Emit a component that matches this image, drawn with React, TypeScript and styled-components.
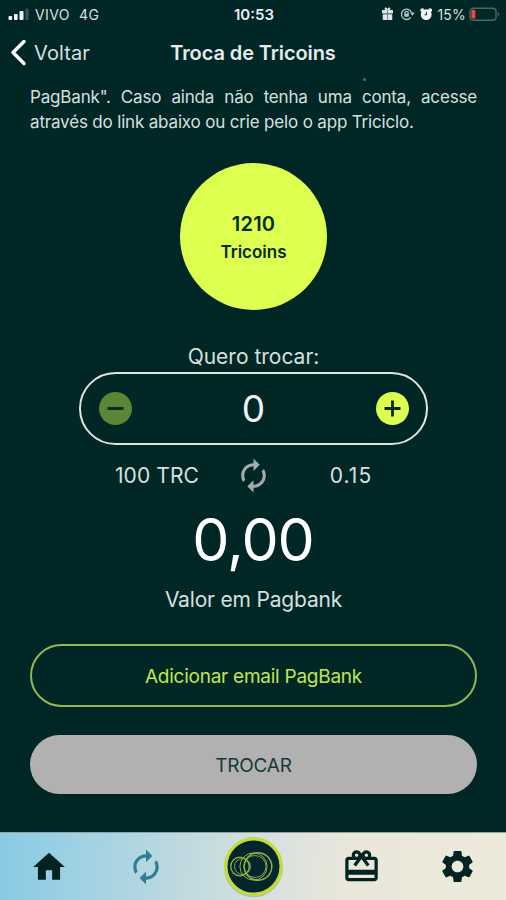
import React from "react";
import styled, { createGlobalStyle } from "styled-components";
import { MdAutorenew, MdCardGiftcard, MdHome, MdSettings } from "react-icons/md";

const colors = {
  night: "#012626",
  lime: "#dcff50",
  pale: "#d5e0df",
  grey: "#b1b1b1",
};

const GlobalStyle = createGlobalStyle`
  * { box-sizing: border-box; }
  body { margin: 0; background: ${colors.night}; }
  button { font: inherit; margin: 0; padding: 0; border: 0; background: none; color: inherit; }
`;

const Screen = styled.div`
  display: flex;
  flex-direction: column;
  width: 506px;
  height: 900px;
  overflow: hidden;
  background: ${colors.night};
  color: ${colors.pale};
  font-family: Inter, "Liberation Sans", sans-serif;
`;

const StatusBar = styled.div`
  display: grid;
  grid-template-columns: 1fr auto 1fr;
  align-items: center;
  height: 28px;
  padding: 0 6px 0 8px;
  font-size: 14px;
`;

const StatusGroup = styled.div<{ $end?: boolean }>`
  display: flex;
  align-items: center;
  justify-content: ${(p) => (p.$end ? "flex-end" : "flex-start")};
`;

const Carrier = styled.span`
  margin-left: 6px;
  letter-spacing: 0.4px;
`;

const Network = styled.span`
  margin-left: 9px;
  letter-spacing: 0.6px;
`;

const Clock = styled.span`
  font-size: 15px;
  font-weight: 600;
  color: #e8eeed;
`;

const BatteryLevel = styled.span`
  margin: 0 3px 0 4px;
  letter-spacing: 0.2px;
`;

const Header = styled.header`
  display: grid;
  grid-template-columns: 1fr auto 1fr;
  align-items: center;
  height: 49px;
  padding: 0 10px;
`;

const BackButton = styled.button`
  display: flex;
  align-items: center;
  gap: 7px;
  font-size: 20px;
  letter-spacing: 0.1px;
`;

const Title = styled.h1`
  margin: 0;
  font-size: 20px;
  font-weight: 600;
  letter-spacing: -0.1px;
  color: #e4eceb;
`;

const Content = styled.main`
  display: flex;
  flex-direction: column;
  align-items: center;
  flex: 1;
  padding: 0 29px 0 30px;
`;

const ClippedLine = styled.div`
  align-self: stretch;
  height: 8px;
  padding: 1px 0 0 333px;
`;

const Speck = styled.div`
  width: 3px;
  height: 3px;
  border-radius: 50%;
  background: #527170;
`;

const Paragraph = styled.p`
  align-self: stretch;
  margin: 0;
  font-size: 17px;
  line-height: 25px;
  letter-spacing: -0.17px;
  text-align: justify;
`;

const Balance = styled.div`
  display: flex;
  flex-direction: column;
  align-items: center;
  width: 147px;
  height: 147px;
  margin-top: 28px;
  padding-top: 48px;
  border-radius: 50%;
  background: ${colors.lime};
  color: #082a20;
  font-weight: 600;
`;

const BalanceValue = styled.span`
  font-size: 20px;
  line-height: 27px;
  letter-spacing: 0.2px;
`;

const BalanceUnit = styled.span`
  font-size: 17px;
  line-height: 28px;
`;

const AmountLabel = styled.label`
  margin-top: 33px;
  font-size: 21px;
  line-height: 28px;
`;

const Stepper = styled.div`
  display: flex;
  align-items: center;
  justify-content: space-between;
  width: 349px;
  height: 73px;
  margin-top: 1px;
  padding: 0 17.5px;
  border: 2.5px solid #e0e5db;
  border-radius: 37px;
`;

const StepButton = styled.button<{ $muted?: boolean }>`
  display: flex;
  align-items: center;
  justify-content: center;
  width: 33px;
  height: 33px;
  border-radius: 50%;
  background: ${(p) => (p.$muted ? "#5b8635" : colors.lime)};
`;

const Amount = styled.span`
  font-size: 37px;
  line-height: 44px;
  color: #f0f4f4;
`;

const Rate = styled.div`
  display: grid;
  grid-template-columns: 156px 37px 157px;
  align-items: center;
  height: 38px;
  margin-top: 11px;
  font-size: 21px;
  text-align: center;
`;

const RateUnit = styled.span<{ $wide?: boolean }>`
  padding-left: ${(p) => (p.$wide ? "2px" : "1px")};
  letter-spacing: ${(p) => (p.$wide ? "1.1px" : "0.1px")};
`;

const Total = styled.div`
  margin: 11px 1px 0 0;
  font-size: 59px;
  line-height: 70px;
  letter-spacing: -1px;
  color: #fff;
`;

const TotalLabel = styled.div`
  margin-top: 11px;
  font-size: 21px;
  line-height: 28px;
  letter-spacing: -0.18px;
`;

const PillButton = styled.button<{ $filled?: boolean }>`
  align-self: stretch;
  height: ${(p) => (p.$filled ? "59px" : "63px")};
  margin-top: ${(p) => (p.$filled ? "28px" : "30px")};
  padding-top: 1px;
  border: ${(p) => (p.$filled ? "0" : "2px solid #91b653")};
  border-radius: 32px;
  background: ${(p) => (p.$filled ? colors.grey : "transparent")};
  color: ${(p) => (p.$filled ? "#17393a" : "#bfe653")};
  font-size: 19px;
  letter-spacing: -0.25px;
`;

const TabBar = styled.nav`
  display: grid;
  grid-template-columns: 97px 97px 118px 98px 95px;
  align-items: center;
  justify-items: center;
  height: 68px;
  border-top: 1px solid #8fa5a3;
  background: linear-gradient(92deg, #89cae4 0%, #a3d2e3 18%, #c0dadf 37%, #dbe1df 55%, #e9e7da 68%, #ecead9 100%);
`;

const Tab = styled.button<{ $active?: boolean }>`
  display: flex;
  color: ${(p) => (p.$active ? "#2e7d95" : "#032323")};
`;

function SignalIcon() {
  return (
    <svg width="21" height="13" viewBox="0 0 21 13">
      <g fill="#f2f6f6">
        <rect x="0.5" y="8" width="3.6" height="4" rx="1" />
        <rect x="6" y="6" width="3.6" height="6" rx="1" />
        <rect x="11.5" y="3" width="4" height="9" rx="1" />
      </g>
      <rect x="17.2" y="0.5" width="3.4" height="11.5" rx="1" fill="#345554" />
    </svg>
  );
}

function StatusIcons() {
  return (
    <svg width="52" height="16" viewBox="0 0 52 16">
      <g fill="#dfe7e6">
        <rect x="1" y="4" width="11" height="3.4" rx="0.6" />
        <rect x="1.7" y="8.2" width="9.6" height="5.8" rx="0.8" />
        <path d="M6.5 4.5C3 4.5 3 1.5 4.7 1.6c1 0 1.5 1 1.8 1.8.3-.8.8-1.8 1.8-1.8 1.7 0 1.7 2.9-1.8 2.9Z" />
      </g>
      <path d="M6.5 4v10" stroke="#587271" strokeWidth="0.8" />
      <g fill="none" stroke="#b7c7c6" strokeWidth="1.3">
        <path d="M30.4 6.2a5.2 5.2 0 1 0-.6 5.2" />
        <path d="M23.9 7.8V7a1.7 1.7 0 0 1 3.4 0v.8" />
      </g>
      <path d="M28.9 6.6h5l-2.5 3.1Z" fill="#b7c7c6" />
      <rect x="23.3" y="7.5" width="4.6" height="3.2" rx="0.6" fill="#b7c7c6" />
      <g fill="#f4f8f8">
        <circle cx="45.2" cy="8.6" r="5.4" />
        <circle cx="41.3" cy="4.2" r="1.9" />
        <circle cx="49.1" cy="4.2" r="1.9" />
      </g>
      <path d="M45.4 5.8v3h-2" fill="none" stroke="#24403f" strokeWidth="1.1" />
    </svg>
  );
}

function BatteryIcon() {
  return (
    <svg width="31" height="15" viewBox="0 0 31 15">
      <rect x="1" y="1.2" width="26" height="12" rx="3.2" fill="none" stroke="#4c6663" strokeWidth="1.4" />
      <path d="M28.7 5c2 .7 2 3.7 0 4.4Z" fill="#4c6663" />
      <rect x="2.4" y="2.8" width="4" height="8.8" rx="1.4" fill="#ee4638" />
    </svg>
  );
}

function ChevronIcon() {
  return (
    <svg width="17" height="27" viewBox="0 0 17 27">
      <path d="M14 2.5 3 13.5l11 11" fill="none" stroke="#fff" strokeWidth="3.5" strokeLinecap="round" strokeLinejoin="round" />
    </svg>
  );
}

function StepIcon({ plus }: { plus?: boolean }) {
  return (
    <svg width="17" height="17" viewBox="0 0 17 17">
      <path d={plus ? "M.5 8.5h16M8.5.5v16" : "M.5 8.5h16"} fill="none" stroke="#062723" strokeWidth="2.8" />
    </svg>
  );
}

function RingsBadge() {
  return (
    <svg width="60" height="62" viewBox="0 0 60 62">
      <circle cx="30.5" cy="32" r="29.3" fill="#8f9e72" opacity="0.5" />
      <circle cx="30.5" cy="30.5" r="27.7" fill="#02262b" stroke="#c2dc3b" strokeWidth="3.4" />
      <g fill="none" stroke="#91b048">
        <circle cx="17" cy="30.5" r="9.3" strokeWidth="1.3" />
        <circle cx="19.5" cy="30.5" r="8" strokeWidth="0.9" />
        <circle cx="30.5" cy="30.5" r="13.6" strokeWidth="1" />
        <circle cx="35" cy="30.5" r="13.8" strokeWidth="1.5" />
        <circle cx="32" cy="30.5" r="11" strokeWidth="0.9" />
      </g>
    </svg>
  );
}

export default function App() {
  return (
    <Screen>
      <GlobalStyle />
      <StatusBar>
        <StatusGroup>
          <SignalIcon />
          <Carrier>VIVO</Carrier>
          <Network>4G</Network>
        </StatusGroup>
        <Clock>10:53</Clock>
        <StatusGroup $end>
          <StatusIcons />
          <BatteryLevel>15%</BatteryLevel>
          <BatteryIcon />
        </StatusGroup>
      </StatusBar>
      <Header>
        <BackButton>
          <ChevronIcon />
          Voltar
        </BackButton>
        <Title>Troca de Tricoins</Title>
      </Header>
      <Content>
        <ClippedLine>
          <Speck />
        </ClippedLine>
        <Paragraph>
          PagBank". Caso ainda não tenha uma conta, acesse através do link abaixo ou crie pelo o app Triciclo.
        </Paragraph>
        <Balance>
          <BalanceValue>1210</BalanceValue>
          <BalanceUnit>Tricoins</BalanceUnit>
        </Balance>
        <AmountLabel>Quero trocar:</AmountLabel>
        <Stepper>
          <StepButton $muted aria-label="Diminuir">
            <StepIcon />
          </StepButton>
          <Amount>0</Amount>
          <StepButton aria-label="Aumentar">
            <StepIcon plus />
          </StepButton>
        </Stepper>
        <Rate>
          <RateUnit>100 TRC</RateUnit>
          <MdAutorenew size={37} color="#a5abad" />
          <RateUnit $wide>0.15</RateUnit>
        </Rate>
        <Total>0,00</Total>
        <TotalLabel>Valor em Pagbank</TotalLabel>
        <PillButton>Adicionar email PagBank</PillButton>
        <PillButton $filled>TROCAR</PillButton>
      </Content>
      <TabBar>
        <Tab aria-label="Início">
          <MdHome size={38} />
        </Tab>
        <Tab $active aria-label="Trocar">
          <MdAutorenew size={38} />
        </Tab>
        <Tab aria-label="Triciclo">
          <RingsBadge />
        </Tab>
        <Tab aria-label="Prêmios">
          <MdCardGiftcard size={39} />
        </Tab>
        <Tab aria-label="Ajustes">
          <MdSettings size={39} />
        </Tab>
      </TabBar>
    </Screen>
  );
}
